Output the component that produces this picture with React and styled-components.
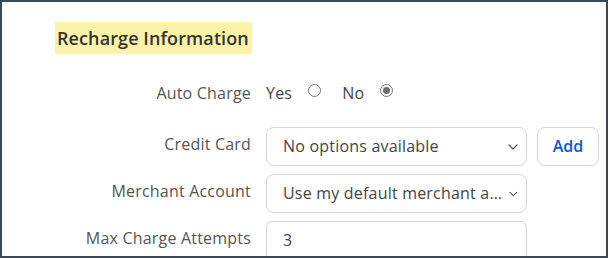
import React from "react";
import styled, { createGlobalStyle } from "styled-components";

const GlobalStyle = createGlobalStyle`
  html, body {
    margin: 0;
    padding: 0;
    background: #ffffff;
  }
  body {
    font-family: "Open Sans", "Liberation Sans", Arial, sans-serif;
  }
`;

const Frame = styled.div`
  width: 608px;
  height: 258px;
  box-sizing: border-box;
  border: 2px solid #3a4955;
  background: #ffffff;
  overflow: hidden;
`;

const Heading = styled.h2`
  display: inline-block;
  margin: 20px 0 0 53px;
  padding: 0 3px 0 2px;
  height: 32px;
  line-height: 32px;
  background: #fdf3a8;
  color: #333333;
  font-size: 18px;
  font-weight: 600;
  letter-spacing: 0.1px;
`;

const Form = styled.div`
  display: grid;
  grid-template-columns: 249px 1fr;
  column-gap: 15px;
  row-gap: 8px;
  margin-top: 24px;
`;

const Label = styled.div`
  text-align: right;
  align-self: ${(p) => (p.$top ? "start" : "center")};
  line-height: ${(p) => (p.$top ? "30px" : "normal")};
  padding-bottom: ${(p) => (p.$top ? 0 : 6)}px;
  color: #555555;
  font-size: 16px;
  letter-spacing: 0.2px;
  white-space: nowrap;
`;

const Controls = styled.div`
  display: flex;
  align-items: center;
  gap: 10px;
  height: ${(p) => (p.$compact ? 30 : 39)}px;
  margin-bottom: ${(p) => (p.$compact ? 11 : 0)}px;
`;

const RadioOption = styled.label`
  display: flex;
  align-items: center;
  gap: 16px;
  margin-right: 11px;
  color: #444444;
  font-size: 16px;
  letter-spacing: 0.2px;
`;

const RadioCircle = styled.span`
  position: relative;
  width: 13px;
  height: 13px;
  box-sizing: border-box;
  border-radius: 50%;
  border: 1px solid #777777;
  margin-top: -6px;
  background: #ffffff;

  &::after {
    content: "";
    display: ${(p) => (p.$checked ? "block" : "none")};
    position: absolute;
    inset: 2px;
    border-radius: 50%;
    background: #6f6f6f;
  }
`;

const Select = styled.div`
  display: flex;
  align-items: center;
  justify-content: space-between;
  width: 261px;
  height: 39px;
  box-sizing: border-box;
  padding: 0 8px 0 16px;
  border: 1px solid #d6d6d6;
  border-radius: 8px;
  color: #444444;
  font-size: 16px;
  letter-spacing: 0.2px;
  white-space: nowrap;
`;

const SelectText = styled.span`
  overflow: hidden;
  text-overflow: ellipsis;
  margin-right: 6px;
  padding-bottom: 2px;
`;

const Input = styled.div`
  width: 261px;
  height: 39px;
  box-sizing: border-box;
  padding: 0 16px 2px;
  border: 1px solid #d6d6d6;
  border-radius: 6px;
  display: flex;
  align-items: center;
  color: #444444;
  font-size: 16px;
`;

const Button = styled.button`
  width: 62px;
  height: 39px;
  box-sizing: border-box;
  border: 1px solid #d6d6d6;
  border-radius: 8px;
  background: #ffffff;
  color: #0b55d4;
  font-family: inherit;
  font-size: 16px;
  font-weight: 600;
  padding: 0 0 2px;
`;

const Chevron = () => (
  <svg width="10" height="6" viewBox="0 0 10 6" fill="none">
    <path d="M1 1l4 4 4-4" stroke="#555" strokeWidth="1.2" strokeLinecap="round" strokeLinejoin="round" />
  </svg>
);

export default function App() {
  return (
    <>
      <GlobalStyle />
      <Frame>
        <Heading>Recharge Information</Heading>
        <Form>
          <Label $top>Auto Charge</Label>
          <Controls $compact>
            <RadioOption>
              Yes <RadioCircle />
            </RadioOption>
            <RadioOption>
              No <RadioCircle $checked />
            </RadioOption>
          </Controls>

          <Label>Credit Card</Label>
          <Controls>
            <Select>
              <SelectText>No options available</SelectText>
              <Chevron />
            </Select>
            <Button>Add</Button>
          </Controls>

          <Label>Merchant Account</Label>
          <Controls>
            <Select>
              <SelectText>Use my default merchant account</SelectText>
              <Chevron />
            </Select>
          </Controls>

          <Label>Max Charge Attempts</Label>
          <Controls>
            <Input>3</Input>
          </Controls>
        </Form>
      </Frame>
    </>
  );
}
